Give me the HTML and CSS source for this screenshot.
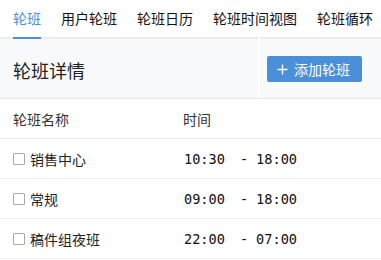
FILE: index.html
```html
<!DOCTYPE html>
<html lang="zh">
<head>
<meta charset="utf-8">
<link rel="stylesheet" href="styles.css">
</head>
<body>
<nav class="tabs">
  <span class="tab active">轮班</span>
  <span class="tab">用户轮班</span>
  <span class="tab">轮班日历</span>
  <span class="tab">轮班时间视图</span>
  <span class="tab">轮班循环</span>
</nav>
<header class="head">
  <div class="head-cell head-left"><h1 class="title">轮班详情</h1></div>
  <div class="head-cell head-right">
    <button class="add-btn"><svg class="plus" width="11" height="11" viewBox="0 0 11 11"><path d="M5.5 0.5v10M0.5 5.5h10" stroke="#fff" stroke-width="1.4" fill="none"/></svg>添加轮班</button>
  </div>
</header>
<div class="table">
  <div class="row thead">
    <div class="c-name">轮班名称</div>
    <div class="c-time">时间</div>
  </div>
  <div class="row">
    <div class="c-name"><span class="cb"></span>销售中心</div>
    <div class="c-time time"><span>10:30</span><span class="dash">-</span><span>18:00</span></div>
  </div>
  <div class="row">
    <div class="c-name"><span class="cb"></span>常规</div>
    <div class="c-time time"><span>09:00</span><span class="dash">-</span><span>18:00</span></div>
  </div>
  <div class="row">
    <div class="c-name"><span class="cb"></span>稿件组夜班</div>
    <div class="c-time time"><span>22:00</span><span class="dash">-</span><span>07:00</span></div>
  </div>
</div>
</body>
</html>
```
FILE: styles.css
```css
* { box-sizing: border-box; }
html, body { margin: 0; padding: 0; background: #fff; }
body {
  width: 381px;
  height: 260px;
  overflow: hidden;
  font-family: "Noto Sans CJK SC", "Noto Sans", sans-serif;
  color: #222;
}
.tabs {
  display: flex;
  gap: 20px;
  height: 37px;
  padding-left: 13px;
  white-space: nowrap;
  position: relative;
  z-index: 2;
}
.tab {
  font-size: 14px;
  line-height: 37px;
  height: 39px;
  color: #111;
}
.tab.active {
  color: #4a8fd8;
  border-bottom: 2px solid #4a8fd8;
}
.head {
  display: grid;
  grid-template-columns: 258px 1fr;
  column-gap: 2px;
  height: 62px;
  border-bottom: 1px solid #e6e7e9;
}
.head-cell {
  background: #f8f9fb;
  border-top: 2px solid #ebecee;
  display: flex;
  align-items: center;
}
.head-left { padding-left: 13px; }
.title {
  margin: 0;
  font-size: 18px;
  font-weight: 400;
  color: #222;
  line-height: 24px;
  position: relative;
  top: 1px;
}
.head-right { padding-left: 7px; }
.add-btn {
  display: flex;
  align-items: center;
  gap: 6px;
  width: 95px;
  height: 26px;
  margin-top: 1px;
  padding: 0 0 0 10px;
  border: 0;
  border-radius: 2px;
  background: #4a8fd8;
  color: #fff;
  font-family: "Noto Sans CJK SC", sans-serif;
  font-size: 14px;
}
.plus { flex: none; }
.row {
  display: flex;
  height: 40px;
  align-items: center;
  border-bottom: 1px solid #eeeff1;
  font-size: 14px;
}
.thead { color: #333; border-bottom-color: #e6e7e9; }
.c-name {
  width: 183px;
  padding-left: 13px;
  display: flex;
  align-items: center;
}
.cb {
  width: 12px;
  height: 12px;
  border: 1px solid #a8a8a8;
  border-radius: 1px;
  margin-right: 5px;
  background: #fff;
}
.time {
  font-family: "DejaVu Sans Mono", monospace;
  font-size: 13.6px;
  color: #111;
  display: flex;
  padding-left: 1px;
}
.dash { margin: 0 8px 0 15px; }
```
